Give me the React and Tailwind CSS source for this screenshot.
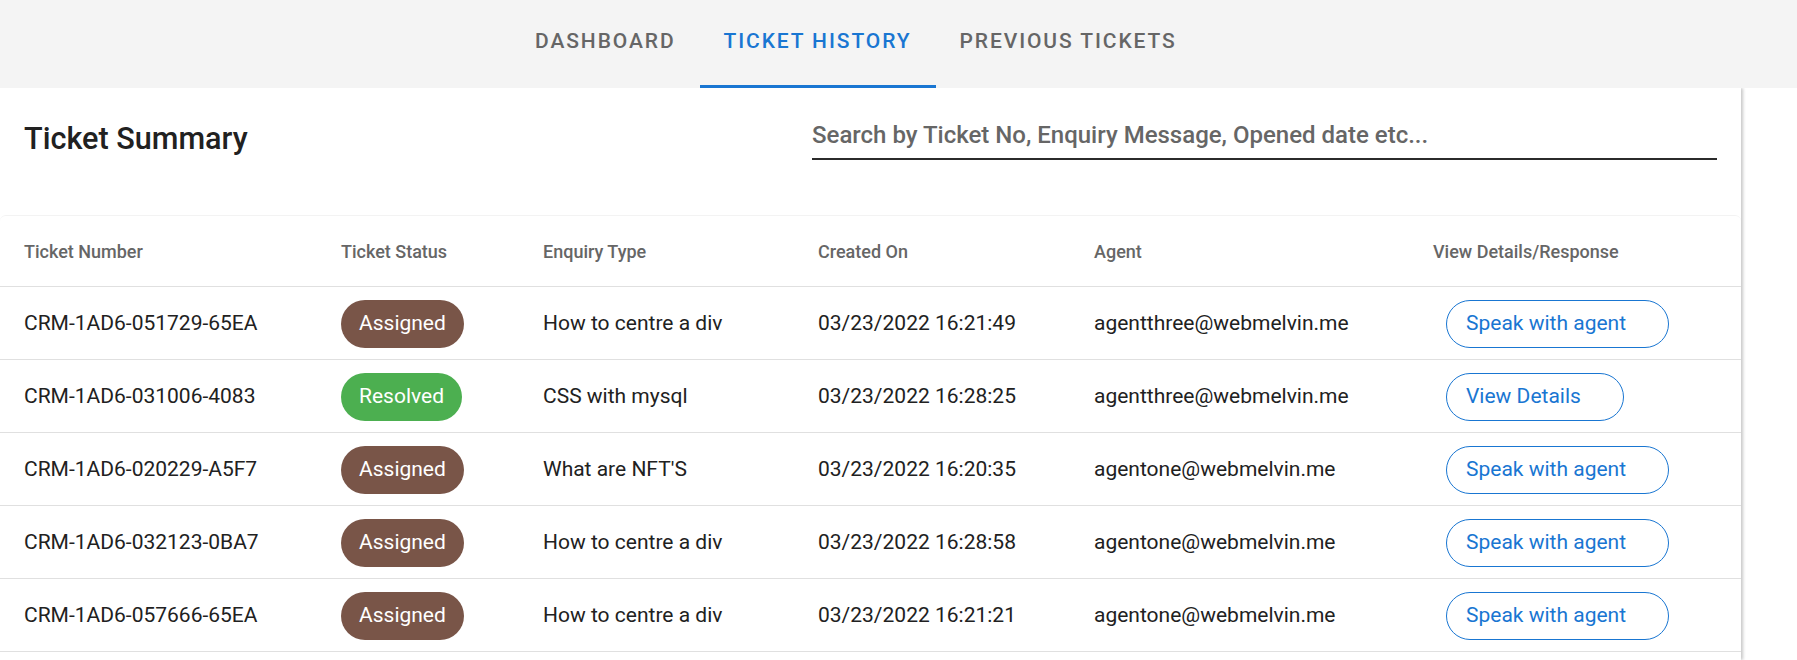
import { useState } from 'react';

const tabs = ['Dashboard', 'Ticket History', 'Previous Tickets'];

const tickets = [
  {
    id: 'CRM-1AD6-051729-65EA',
    status: 'Assigned',
    type: 'How to centre a div',
    created: '03/23/2022 16:21:49',
    agent: 'agentthree@webmelvin.me',
  },
  {
    id: 'CRM-1AD6-031006-4083',
    status: 'Resolved',
    type: 'CSS with mysql',
    created: '03/23/2022 16:28:25',
    agent: 'agentthree@webmelvin.me',
  },
  {
    id: 'CRM-1AD6-020229-A5F7',
    status: 'Assigned',
    type: "What are NFT'S",
    created: '03/23/2022 16:20:35',
    agent: 'agentone@webmelvin.me',
  },
  {
    id: 'CRM-1AD6-032123-0BA7',
    status: 'Assigned',
    type: 'How to centre a div',
    created: '03/23/2022 16:28:58',
    agent: 'agentone@webmelvin.me',
  },
  {
    id: 'CRM-1AD6-057666-65EA',
    status: 'Assigned',
    type: 'How to centre a div',
    created: '03/23/2022 16:21:21',
    agent: 'agentone@webmelvin.me',
  },
];

const cols = 'grid grid-cols-[341px_202px_275px_276px_339px_1fr] items-center';

function StatusChip({ status }) {
  const resolved = status === 'Resolved';
  return (
    <span
      className={`inline-flex h-[48px] items-center rounded-full px-[18px] text-[21px] text-white ${
        resolved ? 'bg-[#4caf50]' : 'bg-[#795548]'
      }`}
    >
      {status}
    </span>
  );
}

export default function App() {
  const [activeTab, setActiveTab] = useState(1);
  const [search, setSearch] = useState('');

  return (
    <div className="min-h-screen bg-white font-['Roboto',sans-serif] text-[#212121]">
      <header className="relative z-10 flex h-[88px] bg-[#f4f4f4] pl-[511px]">
        {tabs.map((tab, i) => (
          <button
            key={tab}
            onClick={() => setActiveTab(i)}
            className={`flex h-[88px] items-start px-6 pt-[28px] text-[21px] font-medium uppercase leading-[26px] tracking-[1.9px] ${
              i === activeTab
                ? 'border-b-[3px] border-[#1976d2] text-[#1976d2]'
                : 'text-[#666666]'
            }`}
          >
            {tab}
          </button>
        ))}
      </header>

      <main className="min-h-[572px] w-[1741px] bg-white shadow-[2px_0_3px_rgba(0,0,0,0.22)]">
        <div className="flex h-[127px] items-start justify-between px-6 pt-8">
          <h1 className="pt-px text-[30.6px] font-medium leading-[36px] text-[#212121]">Ticket Summary</h1>
          <div className="w-[905px] border-b-2 border-[#2b2b2b] pb-2">
            <input
              value={search}
              onChange={(e) => setSearch(e.target.value)}
              placeholder="Search by Ticket No, Enquiry Message, Opened date etc..."
              className="block w-full bg-transparent text-[24px] font-medium leading-[30px] text-[#212121] placeholder:text-[#666666] focus:outline-none"
            />
          </div>
        </div>

        <div className="rounded-t-md border-t border-[#f3f3f3]">
          <div className={`${cols} h-[71px] border-b border-[#e0e0e0] text-[18px] font-medium text-[#666666]`}>
            <div className="pl-6">Ticket Number</div>
            <div>Ticket Status</div>
            <div>Enquiry Type</div>
            <div>Created On</div>
            <div>Agent</div>
            <div>View Details/Response</div>
          </div>

          {tickets.map((t) => (
            <div key={t.id} className={`${cols} h-[73px] border-b border-[#e0e0e0] pt-px text-[21px]`}>
              <div className="pl-6">{t.id}</div>
              <div>
                <StatusChip status={t.status} />
              </div>
              <div>{t.type}</div>
              <div>{t.created}</div>
              <div>{t.agent}</div>
              <div>
                <button className="ml-[13px] flex h-[48px] items-center rounded-full border border-[#1976d2] pl-[19px] pr-[42px] text-[21px] text-[#1976d2]">
                  {t.status === 'Resolved' ? 'View Details' : 'Speak with agent'}
                </button>
              </div>
            </div>
          ))}
        </div>
      </main>
    </div>
  );
}
